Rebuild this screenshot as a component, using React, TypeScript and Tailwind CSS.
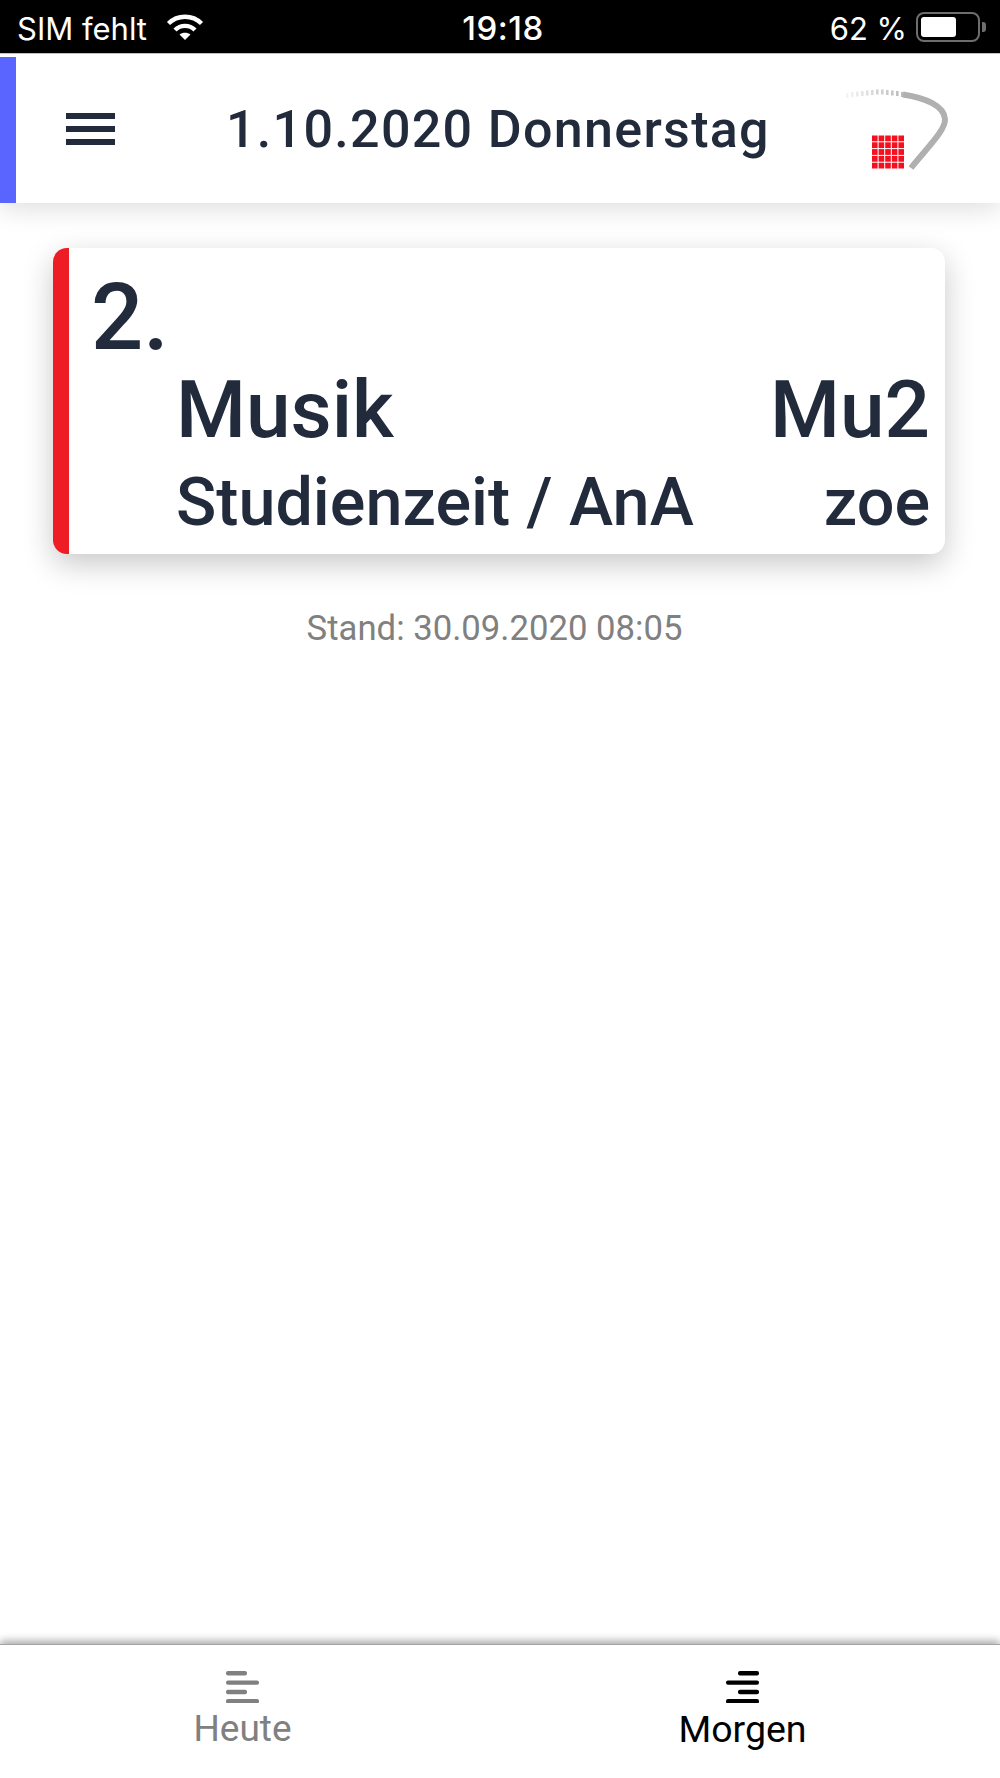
const ROBOTO = "font-['Roboto',sans-serif]";

// gray swoosh of the school logo, broken into ticks on its fading tail
const TAIL_TICKS = [
  [846, 92, 0.12], [851, 91, 0.18], [856, 90.5, 0.24], [861, 90, 0.3], [866, 89.5, 0.36],
  [871, 89, 0.42], [876, 88.5, 0.5], [881, 88.5, 0.55], [886, 89, 0.6], [891, 89.5, 0.66],
  [896, 90, 0.72], [901, 91, 0.78],
];

function Logo() {
  const cells = [0, 1, 2, 3, 4];
  return (
    <svg width="120" height="96" viewBox="840 80 120 96" className="shrink-0">
      {TAIL_TICKS.map(([x, y, o]) => (
        <rect key={x} x={x} y={y} width="2.6" height="5" fill="#a8a8a8" opacity={o} />
      ))}
      <path
        d="M903 93.5 C926 97 944 105 945 118 C946 129 926 148 911 167"
        fill="none"
        stroke="#b0b0b0"
        strokeWidth="6"
      />
      {cells.map((row) =>
        cells.map((col) => (
          <rect
            key={`${row}-${col}`}
            x={872 + col * 6.6}
            y={134.5 + row * 6.8}
            width="5.6"
            height="5.8"
            fill="#f5101f"
          />
        )),
      )}
    </svg>
  );
}

function WifiIcon() {
  return (
    <svg width="38" height="28" viewBox="0 0 38 28" fill="none" stroke="#fff" strokeWidth="4.4">
      <path d="M2.5 10.5 C11.5 1.5 26.5 1.5 35.5 10.5" />
      <path d="M9 17 C14.5 11.5 23.5 11.5 29 17" />
      <path d="M19 27 L13.5 21.6 C16.5 19.2 21.5 19.2 24.5 21.6 Z" fill="#fff" stroke="none" />
    </svg>
  );
}

function Battery() {
  return (
    <div className="flex items-center">
      <div className="w-[64px] h-[30px] rounded-[8px] border-2 border-[#6e6e6e] p-[3px]">
        <div className="w-[35px] h-full rounded-[3px] bg-white" />
      </div>
      <div className="ml-[2px] w-[4px] h-[10px] rounded-r-[3px] bg-[#6e6e6e]" />
    </div>
  );
}

function StatusBar() {
  return (
    <div className="h-[53px] bg-black text-white grid grid-cols-3 items-center font-['Inter',sans-serif] text-[31px] border-b border-[#c8c8c8] box-content">
      <div className="flex items-center pl-[17px] gap-[19px]">
        <span className="mt-[4px]">SIM fehlt</span>
        <WifiIcon />
      </div>
      <div className="mt-[4px] pl-[6px] text-center font-medium text-[33px] tracking-[0.5px]">19:18</div>
      <div className="flex items-center justify-end pr-[14px] gap-[9px]">
        <span className="mt-[4px]">62 %</span>
        <Battery />
      </div>
    </div>
  );
}

function Header() {
  return (
    <header className="relative z-10 h-[149px] bg-white flex items-center shadow-[0_6px_24px_rgba(0,0,0,0.13)]">
      <div className="w-4 h-[146px] mt-[3px] bg-[#5a64ff] shrink-0" />
      <div className="ml-[50px] w-[49px] flex flex-col gap-[7px] shrink-0">
        <div className="h-[6px] bg-[#222b3c]" />
        <div className="h-[6px] bg-[#222b3c]" />
        <div className="h-[6px] bg-[#222b3c]" />
      </div>
      <h1 className={`${ROBOTO} ml-[111px] mt-[2px] text-[52px] font-medium tracking-[1.3px] text-[#222b3c] whitespace-nowrap`}>
        1.10.2020 Donnerstag
      </h1>
      <div className="ml-auto mr-[40px] mt-[1px]">
        <Logo />
      </div>
    </header>
  );
}

function LessonCard() {
  return (
    <article className={`${ROBOTO} h-[306px] rounded-[14px] bg-white border-l-[16px] border-[#ee1c25] shadow-[0_10px_30px_rgba(0,0,0,0.22)] text-[#222b3c] font-medium`}>
      <div className="pl-[22px] pt-[24px] text-[92px] leading-[92px]">2.</div>
      <div className="mt-[1px] pl-[107px] pr-[15px] flex items-baseline justify-between text-[80px] leading-[90px]">
        <span>Musik</span>
        <span>Mu2</span>
      </div>
      <div className="mt-[9px] pl-[107px] pr-[15px] flex items-baseline justify-between text-[66.5px] leading-[76px]">
        <span>Studienzeit / AnA</span>
        <span>zoe</span>
      </div>
    </article>
  );
}

function TabIcon({ mirrored, color }: { mirrored?: boolean; color: string }) {
  const short = mirrored ? 12 : 0;
  return (
    <svg width="33" height="32" viewBox="0 0 33 32" fill={color}>
      <rect x={short} y="0" width="21" height="4.4" rx="2" />
      <rect x="0" y="9.4" width="33" height="4.4" rx="2" />
      <rect x={short} y="18.8" width="21" height="4.4" rx="2" />
      <rect x="0" y="28" width="33" height="4.4" rx="2" />
    </svg>
  );
}

function BottomTabs() {
  return (
    <nav className={`${ROBOTO} relative z-10 h-[134px] bg-white grid grid-cols-[485px_515px] border-t border-[#a4a4a4] shadow-[0_-3px_8px_rgba(0,0,0,0.35)]`}>
      <div className="flex flex-col items-center pt-[26px] text-[#808080] text-[37px]">
        <TabIcon color="#808080" />
        <span className="leading-[46px] mt-[3px]">Heute</span>
      </div>
      <div className="flex flex-col items-center pt-[26px] text-black text-[37.5px]">
        <TabIcon mirrored color="#000000" />
        <span className="leading-[46px] mt-[3px]">Morgen</span>
      </div>
    </nav>
  );
}

export default function App() {
  return (
    <div className="w-[1000px] h-[1778px] flex flex-col bg-white overflow-hidden">
      <StatusBar />
      <Header />
      <main className="flex-1 pl-[53px] pt-[45px] pr-[55px]">
        <LessonCard />
        <p className={`${ROBOTO} mt-[54px] pr-[9px] text-center text-[34.7px] leading-[40px] text-[#808080]`}>
          Stand: 30.09.2020 08:05
        </p>
      </main>
      <BottomTabs />
    </div>
  );
}
